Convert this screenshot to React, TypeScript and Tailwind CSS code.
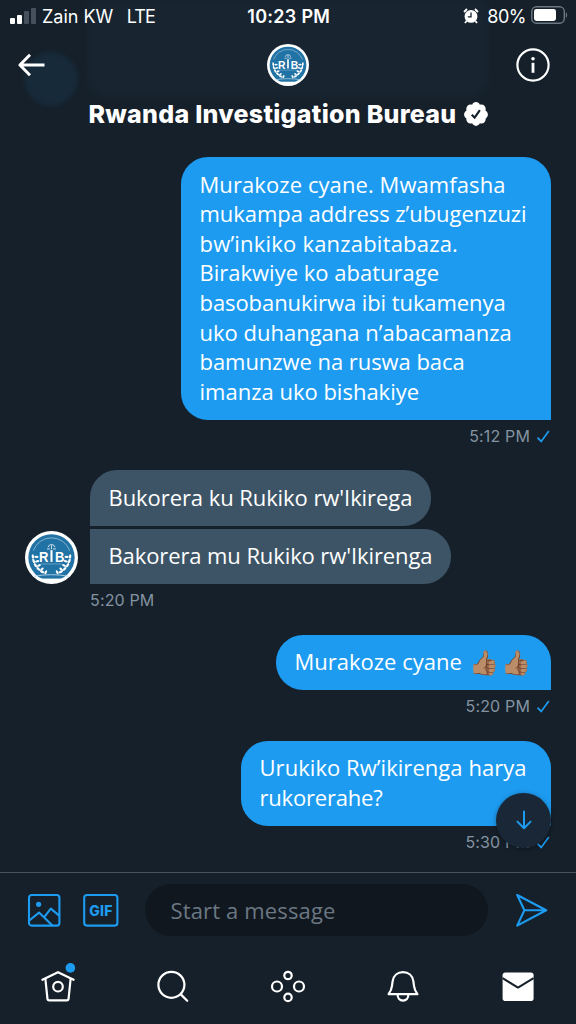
import type { ReactNode } from "react";

function Seal({ className }: { className: string }) {
  const leaves = [
    [8, 26, 85],
    [8.8, 30.5, 70],
    [10.6, 34.8, 58],
    [13.6, 38.6, 42],
    [17.6, 41.6, 22],
  ];
  return (
    <svg viewBox="0 0 54 54" className={className}>
      <defs>
        <clipPath id="seal">
          <circle cx="27" cy="27" r="23.6" />
        </clipPath>
      </defs>
      <circle cx="27" cy="27" r="27" fill="#fff" />
      <g clipPath="url(#seal)">
        <rect width="54" height="48.5" fill="#2273a5" />
      </g>
      <path d="M8.4 20a19.8 19.8 0 0 1 37.2 0" fill="none" stroke="#9cc4dd" strokeWidth="0.8" />
      <g fill="#fff">
        {leaves.map(([x, y, a]) => (
          <g key={y}>
            <ellipse cx={x} cy={y} rx="2.4" ry="1.2" transform={`rotate(${a} ${x} ${y})`} />
            <ellipse cx={x + 3.6} cy={y + 0.4} rx="2.2" ry="1.1" transform={`rotate(${a - 85} ${x + 3.6} ${y + 0.4})`} />
            <ellipse cx={54 - x} cy={y} rx="2.4" ry="1.2" transform={`rotate(${-a} ${54 - x} ${y})`} />
            <ellipse cx={50.4 - x} cy={y + 0.4} rx="2.2" ry="1.1" transform={`rotate(${85 - a} ${50.4 - x} ${y + 0.4})`} />
          </g>
        ))}
      </g>
      <path d="M9.500 46.200c11-2.200 24-2.200 35 0" fill="none" stroke="#b9d6e7" strokeWidth="0.9" />
      <path d="M23.500 16.500a3.600 3.600 0 0 1 7 0M22.500 18.300h3M28.500 18.300h3M27 14.500v4" fill="none" stroke="#cfe3ef" strokeWidth="1" />
      <g fill="#fff" fontFamily="Liberation Sans, sans-serif" fontWeight="700" fontSize="14">
        <text x="14.300" y="31.500" textLength="9.600" lengthAdjust="spacingAndGlyphs">R</text>
        <text x="30.500" y="31.500" textLength="9.600" lengthAdjust="spacingAndGlyphs">B</text>
      </g>
      <path d="M27 19.500v12" stroke="#fff" strokeWidth="2.100" />
      <path d="M16 33.600h22" stroke="#7fb2d1" strokeWidth="0.700" />
    </svg>
  );
}

function StatusBar() {
  return (
    <div className="flex h-[33px] items-center font-['Inter',sans-serif] text-[18px] leading-[22px]">
      <div className="flex flex-1 items-center pl-[10px]">
        <div className="mt-[-2px] flex h-4 items-end gap-[2px]">
          <i className="h-[6px] w-[5px] rounded-[1px] bg-white" />
          <i className="h-[9px] w-[5px] rounded-[1px] bg-white" />
          <i className="h-[13px] w-[5px] rounded-[1px] bg-[#46505c]" />
          <i className="h-4 w-[5px] rounded-[1px] bg-[#46505c]" />
        </div>
        <span className="ml-[6px]">Zain KW</span>
        <span className="ml-[13.5px] tracking-[-0.9px]">LTE</span>
      </div>
      <span className="font-semibold tracking-[0.3px]">10:23 PM</span>
      <div className="flex flex-1 items-center justify-end pr-[8.5px]">
        <svg viewBox="0 0 16 16" className="mt-[-2px] mr-[8px] size-[16px]" fill="none">
          <circle cx="8" cy="8.4" r="6.4" fill="#fff" />
          <path d="M1 4l3-3M15 4l-3-3M3.6 13l-1.6 2M12.4 13l1.6 2" stroke="#fff" strokeWidth="1.8" />
          <path d="M8 4.6v4.2H4.8" stroke="#15202b" strokeWidth="1.3" />
        </svg>
        <span className="mr-[4.5px] tracking-[-0.5px]">80%</span>
        <svg viewBox="0 0 37 18" className="mt-[-3px] h-[18px] w-[37px]">
          <rect x="0.8" y="0.8" width="32.5" height="16.4" rx="4.6" fill="none" stroke="#6d7782" strokeWidth="1.4" />
          <rect x="3" y="3" width="22" height="12" rx="2.4" fill="#fff" />
          <path d="M34.8 6.2c1.8.8 1.8 4.8 0 5.6z" fill="#6d7782" />
        </svg>
      </div>
    </div>
  );
}

function Header() {
  return (
    <header className="flex h-[107px] flex-col">
      <div className="grid h-[63px] grid-cols-[1fr_42px_1fr] items-center pr-[26px] pl-[17px]">
        <svg viewBox="0 0 34 30" className="h-[30px] w-[34px]" fill="none" stroke="#fff" strokeWidth="3">
          <path d="M27.5 15H3.5M13 4.8L2.9 15 13 25.2" strokeLinejoin="round" />
        </svg>
        <Seal className="ml-[4.5px] size-[42px]" />
        <svg viewBox="0 0 34 34" className="ml-auto size-[34px]" fill="none" stroke="#fff">
          <circle cx="17" cy="17" r="15.6" strokeWidth="2.2" />
          <path d="M17 14.8v10" strokeWidth="2.8" />
          <circle cx="17" cy="10.8" r="1.8" fill="#fff" stroke="none" />
        </svg>
      </div>
      <div className="mt-[1px] flex items-center justify-center font-['Inter',sans-serif] text-[25px] leading-[34px] font-extrabold tracking-[0.28px]">
        Rwanda Investigation Bureau
        <svg viewBox="1.4 1.4 21.2 21.2" className="ml-[7px] size-[24px]">
          <path
            d="M22.5 12.5c0-1.58-.875-2.95-2.148-3.6.154-.435.238-.905.238-1.4 0-2.21-1.71-3.998-3.818-3.998-.47 0-.92.084-1.336.25C14.818 2.415 13.51 1.5 12 1.5s-2.816.917-3.437 2.25c-.415-.165-.866-.25-1.336-.25-2.11 0-3.818 1.79-3.818 4 0 .494.083.964.237 1.4-1.272.65-2.147 2.018-2.147 3.6 0 1.495.782 2.798 1.942 3.486-.02.17-.032.34-.032.514 0 2.21 1.708 4 3.818 4 .47 0 .92-.086 1.335-.25.62 1.334 1.926 2.25 3.437 2.25 1.512 0 2.818-.916 3.437-2.25.415.163.865.248 1.336.248 2.11 0 3.818-1.79 3.818-4 0-.174-.012-.344-.033-.513 1.158-.687 1.943-1.99 1.943-3.484z"
            fill="#fff"
          />
          <path d="M8.2 12.6l2.6 2.5 4.6-6.6" fill="none" stroke="#15202b" strokeWidth="1.9" />
        </svg>
      </div>
    </header>
  );
}

function Bubble({ className, children }: { className: string; children: ReactNode }) {
  return (
    <div
      className={
        "shrink-0 pt-[12.5px] pb-[13.3px] pl-[18.5px] font-['Open_Sans',sans-serif] text-[22px] leading-[29.6px] whitespace-nowrap " +
        className
      }
    >
      {children}
    </div>
  );
}

const SENT = "rounded-[27px] rounded-br-none bg-[#1d9bf0] ml-auto ";
const GOT = "rounded-r-[27px] bg-[#3d5466] ";

function SentTime({ children }: { children: ReactNode }) {
  return (
    <div className="mt-[4px] mb-[1px] flex h-[24px] items-center justify-end gap-[6px] font-['Inter',sans-serif] text-[16px] tracking-[0.15px] text-[#8493a1]">
      {children}
      <svg viewBox="0 0 14 14" className="mr-[1px] size-[14px]" fill="none" stroke="#1d9bf0" strokeWidth="1.7">
        <path d="M1.5 8.6l3.7 3.8L12.8 2" />
      </svg>
    </div>
  );
}

function Chat() {
  return (
    <main className="flex h-[732px] flex-col pt-[17.2px] pr-[25px]">
      <Bubble className={SENT + "w-[370px]"}>
        <p className="tracking-[0.08px]">Murakoze cyane. Mwamfasha</p>
        <p className="tracking-[-0.05px]">mukampa address z’ubugenzuzi</p>
        <p className="tracking-[0.2px]">bw’inkiko kanzabitabaza.</p>
        <p>Birakwiye ko abaturage</p>
        <p className="tracking-[-0.07px]">basobanukirwa ibi tukamenya</p>
        <p>uko duhangana n’abacamanza</p>
        <p className="tracking-[-0.05px]">bamunzwe na ruswa baca</p>
        <p>imanza uko bishakiye</p>
      </Bubble>
      <SentTime>5:12 PM</SentTime>

      <div className="mt-[21.5px] flex items-end pl-[24.5px]">
        <Seal className="mr-[12.5px] size-[53px]" />
        <div className="flex flex-col gap-[3px]">
          <Bubble className={GOT + "w-[341px] rounded-tl-[27px] tracking-[-0.07px]"}>Bukorera ku Rukiko rw'Ikirega</Bubble>
          <Bubble className={GOT + "w-[361px] tracking-[-0.1px]"}>Bakorera mu Rukiko rw'Ikirenga</Bubble>
        </div>
      </div>
      <div className="mt-[4px] ml-[90px] h-[24px] font-['Inter',sans-serif] text-[16px] leading-[24px] tracking-[0.15px] text-[#8493a1]">
        5:20 PM
      </div>

      <Bubble className={SENT + "mt-[22.8px] flex w-[275px]"}>
        Murakoze cyane
        <span className="ml-[7px] flex gap-[2px] text-[24px]">
          <span>👍🏽</span>
          <span>👍🏽</span>
        </span>
      </Bubble>
      <SentTime>5:20 PM</SentTime>

      <Bubble className={SENT + "mt-[21.5px] w-[310px]"}>
        <p className="tracking-[0.05px]">Urukiko Rw’ikirenga harya</p>
        <p className="tracking-[-0.2px]">rukorerahe?</p>
      </Bubble>
      <SentTime>5:30 PM</SentTime>
    </main>
  );
}

function Composer() {
  return (
    <div className="flex h-[77px] items-center border-t border-[#46535f] pb-[1.5px] pl-[27px] text-[#1d9bf0]">
      <svg viewBox="0 0 34 34" className="size-[34px]" fill="none" stroke="currentColor" strokeWidth="2.1">
        <rect x="2" y="2" width="30.4" height="30.6" rx="2.6" />
        <circle cx="11.6" cy="11.3" r="2.6" fill="currentColor" stroke="none" />
        <path d="M2 27.8l10-8.2 13.4 13M17.4 23.8l6.4-8.2 8.4 7" strokeLinejoin="round" />
      </svg>
      <svg viewBox="0 0 36 34" className="ml-[22px] h-[34px] w-[36px]">
        <rect x="1.2" y="2" width="33.2" height="30.6" rx="2.8" fill="none" stroke="currentColor" strokeWidth="2.1" />
        <text x="18" y="22.6" textAnchor="middle" fontFamily="Inter, sans-serif" fontSize="14" fontWeight="800" letterSpacing="0.3" fill="currentColor">
          GIF
        </text>
      </svg>
      <div className="ml-[25.500px] h-[52px] w-[343px] rounded-full bg-[#10171f] pl-[26px] font-['Open_Sans',sans-serif] text-[22px] leading-[52px] tracking-[0.15px] text-[#6b7883]">
        Start a message
      </div>
      <svg viewBox="0 0 34 34" className="ml-[26.500px] size-[34px]" fill="none" stroke="currentColor" strokeWidth="2.1" strokeLinejoin="round">
        <path d="M3.2 2l29 15.3-29 15.3 7.2-15.3zM10.4 17.3h21" />
      </svg>
    </div>
  );
}

function NavIcon({ children }: { children: ReactNode }) {
  return (
    <div className="flex flex-1 justify-center">
      <svg viewBox="0 0 40 40" className="size-[40px] overflow-visible" fill="none" stroke="#fff" strokeWidth="2.2" strokeLinecap="round" strokeLinejoin="round">
        {children}
      </svg>
    </div>
  );
}

function NavBar() {
  return (
    <nav className="flex h-[75px] pt-[17px]">
      <NavIcon>
        <path d="M4.4 13.8L20 6.2l15.6 7.6" />
        <path d="M7.4 13l2 19.4a2 2 0 0 0 2 1.900h17.200a2 2 0 0 0 2-1.900l2-19.400" />
        <circle cx="20" cy="20.7" r="4.8" />
        <circle cx="32.4" cy="1.9" r="4.8" fill="#1d9bf0" stroke="none" />
      </NavIcon>
      <NavIcon>
        <circle cx="18.4" cy="18.8" r="13" />
        <path d="M27.8 28.4l6.4 6.4" />
      </NavIcon>
      <NavIcon>
        <circle cx="9" cy="20.5" r="5" />
        <circle cx="31" cy="20.5" r="5" />
        <circle cx="20" cy="9.5" r="3.7" />
        <circle cx="20" cy="31.4" r="3.7" />
      </NavIcon>
      <NavIcon>
        <path d="M5.6 28.2h28.8c-1.6-2.4-3-4.6-3.4-8.4l-.6-4.4C29.6 9.4 25.4 6.2 20 6.2S10.4 9.4 9.6 15.4l-.6 4.4c-.4 3.8-1.8 6-3.4 8.4z" />
        <path d="M14.6 28.6c0 3.600 2.200 6 5.400 6s5.400-2.400 5.400-6" />
      </NavIcon>
      <NavIcon>
        <rect x="4.600" y="6.500" width="31" height="28.600" rx="2.800" fill="#fff" stroke="none" />
        <path d="M4.600 12.200L20 21.600l15.600-9.400" stroke="#15202b" strokeLinecap="butt" strokeWidth="2" />
      </NavIcon>
    </nav>
  );
}

export default function App() {
  return (
    <div className="relative h-[1024px] w-[576px] overflow-hidden bg-[#15202a] text-white">
      <div className="absolute top-0 left-[88px] h-[97px] w-[400px] rounded-b-[20px] bg-[#182531] blur-[3px]" />
      <div className="absolute top-[52px] left-[24px] size-[54px] rounded-full bg-[#172a39] blur-[2px]" />
      <div className="relative">
        <StatusBar />
        <Header />
        <Chat />
        <Composer />
        <NavBar />
      </div>
      <div className="absolute top-[792.5px] left-[496px] flex size-[55px] items-center justify-center rounded-full bg-[#1a2736] shadow-[0_1px_5px_rgba(0,0,0,0.35)]">
        <svg viewBox="0 0 20 20" className="size-[20px]" fill="none" stroke="#1d9bf0" strokeWidth="2" strokeLinecap="round" strokeLinejoin="round">
          <path d="M10 1.6v16.400M3.400 11.600L10 18.200l6.600-6.600" />
        </svg>
      </div>
    </div>
  );
}
